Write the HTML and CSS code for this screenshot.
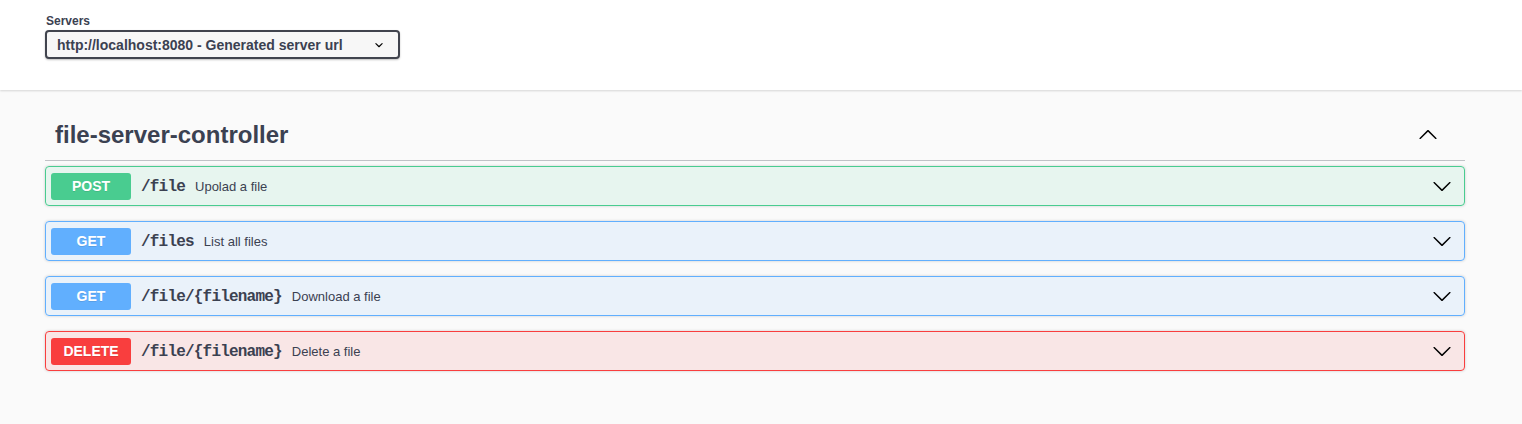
FILE: index.html
```html
<!DOCTYPE html>
<html>
<head>
<meta charset="utf-8">
<link rel="stylesheet" href="styles.css">
</head>
<body>
<div class="scheme">
  <div class="wrap">
    <div class="servers">
      <span class="servers-title">Servers</span>
      <div class="select">
        <span>http://localhost:8080 - Generated server url</span>
        <svg class="sel-arrow" width="16" height="16" viewBox="0 0 20 20"><path d="M13.418 7.859a.695.695 0 01.978 0 .68.68 0 010 .969l-3.908 3.83a.697.697 0 01-.979 0l-3.908-3.83a.68.68 0 010-.969.695.695 0 01.978 0L10 11l3.418-3.141z" fill="#000"/></svg>
      </div>
    </div>
  </div>
</div>
<div class="main">
  <div class="wrap">
    <div class="tag">
      <h3 class="tag-title">file-server-controller</h3>
      <svg class="tag-arrow" width="20" height="20" viewBox="0 0 20 20"><path d="M17.418 14.891c.272.268.709.268.979 0s.271-.701 0-.969l-7.908-7.83c-.27-.268-.707-.268-.979 0l-7.908 7.83c-.27.268-.27.701 0 .969.271.268.709.268.979 0L10 7.75l7.418 7.141z" fill="#000"/></svg>
    </div>
    <div class="op post">
      <span class="method">POST</span>
      <span class="path">/file</span>
      <span class="desc">Upolad a file</span>
      <svg class="op-arrow" width="20" height="20" viewBox="0 0 20 20"><path d="M17.418 6.109c.272-.268.709-.268.979 0s.271.701 0 .969l-7.908 7.83c-.27.268-.707.268-.979 0l-7.908-7.83c-.27-.268-.27-.701 0-.969.271-.268.709-.268.979 0L10 13.250l7.418-7.141z" fill="#000"/></svg>
    </div>
    <div class="op get">
      <span class="method">GET</span>
      <span class="path">/files</span>
      <span class="desc">List all files</span>
      <svg class="op-arrow" width="20" height="20" viewBox="0 0 20 20"><path d="M17.418 6.109c.272-.268.709-.268.979 0s.271.701 0 .969l-7.908 7.83c-.27.268-.707.268-.979 0l-7.908-7.83c-.27-.268-.27-.701 0-.969.271-.268.709-.268.979 0L10 13.250l7.418-7.141z" fill="#000"/></svg>
    </div>
    <div class="op get">
      <span class="method">GET</span>
      <span class="path">/file/{filename}</span>
      <span class="desc">Download a file</span>
      <svg class="op-arrow" width="20" height="20" viewBox="0 0 20 20"><path d="M17.418 6.109c.272-.268.709-.268.979 0s.271.701 0 .969l-7.908 7.83c-.27.268-.707.268-.979 0l-7.908-7.83c-.27-.268-.27-.701 0-.969.271-.268.709-.268.979 0L10 13.250l7.418-7.141z" fill="#000"/></svg>
    </div>
    <div class="op delete">
      <span class="method">DELETE</span>
      <span class="path">/file/{filename}</span>
      <span class="desc">Delete a file</span>
      <svg class="op-arrow" width="20" height="20" viewBox="0 0 20 20"><path d="M17.418 6.109c.272-.268.709-.268.979 0s.271.701 0 .969l-7.908 7.83c-.27.268-.707.268-.979 0l-7.908-7.83c-.27-.268-.27-.701 0-.969.271-.268.709-.268.979 0L10 13.250l7.418-7.141z" fill="#000"/></svg>
    </div>
  </div>
</div>
</body>
</html>
```
FILE: styles.css
```css
* { box-sizing: border-box; }
html, body { margin: 0; padding: 0; }
body {
  background: #fafafa;
  font-family: "Liberation Sans", Arial, sans-serif;
  color: #3b4151;
  min-height: 424px;
}
.wrap {
  width: 1420px;
  margin-left: 45px;
}
.scheme {
  background: #fff;
  height: 90px;
  box-shadow: 0 1px 2px 0 rgba(0,0,0,.15);
  padding-top: 14px;
  position: relative;
}
.servers {
  display: flex;
  flex-direction: column;
  align-items: flex-start;
}
.servers-title {
  font-size: 12px;
  font-weight: bold;
  line-height: 15px;
  margin-left: 1px;
  margin-bottom: 2px;
}
.select {
  width: 355px;
  height: 29px;
  margin-top: -1px;
  border: 2px solid #41444e;
  border-radius: 4px;
  box-shadow: 0 1px 2px 0 rgba(0,0,0,.25);
  background: #f7f7f7;
  display: flex;
  align-items: center;
  justify-content: space-between;
  padding: 0 11px 0 10px;
  font-size: 14px;
  font-weight: bold;
  color: #3b4151;
}
.sel-arrow { display: block; }
.main {
  padding-top: 20px;
}
.tag {
  display: flex;
  align-items: center;
  justify-content: space-between;
  height: 51px;
  padding: 10px 27px 10px 10px;
  border-bottom: 1px solid rgba(59,65,81,.3);
  margin-bottom: 5px;
}
.tag-title {
  margin: 0;
  font-size: 24px;
  font-weight: bold;
  line-height: 30px;
  color: #3b4151;
}
.tag-arrow { display: block; margin-top: -2px; }
.op {
  display: flex;
  align-items: center;
  height: 40px;
  border: 1px solid;
  border-radius: 4px;
  padding: 5px 12px 5px 5px;
  margin-bottom: 15px;
  box-shadow: 0 0 3px rgba(0,0,0,.19);
}
.method {
  min-width: 80px;
  height: 27px;
  display: flex;
  align-items: center;
  justify-content: center;
  border-radius: 3px;
  color: #fff;
  font-size: 14px;
  font-weight: bold;
  text-shadow: 0 1px 0 rgba(0,0,0,.1);
}
.path {
  font-family: "Liberation Mono", "DejaVu Sans Mono", monospace;
  font-size: 16px;
  font-weight: bold;
  letter-spacing: -0.8px;
  padding: 0 10px;
  color: #3b4151;
  margin-top: 1px;
}
.desc {
  flex: 1;
  font-size: 13px;
  color: #3b4151;
}
.op-arrow { display: block; }
.post { background: rgba(73,204,144,.1); border-color: #49cc90; }
.post .method { background: #49cc90; }
.get { background: rgba(97,175,254,.1); border-color: #61affe; }
.get .method { background: #61affe; }
.delete { background: rgba(249,62,62,.1); border-color: #f93e3e; }
.delete .method { background: #f93e3e; }
```
